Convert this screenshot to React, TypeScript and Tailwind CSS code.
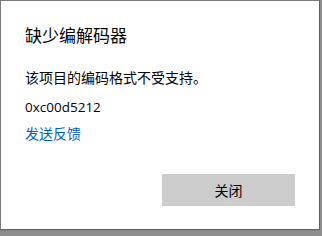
export default function App() {
  return (
    <div
      className="w-[322px] h-[236px] bg-[#8c8c8c] overflow-hidden"
      style={{ fontFamily: '"Noto Sans CJK SC", "Noto Sans", sans-serif' }}
    >
      <div className="w-[320px] h-[230px] bg-white border border-[#7a7a7a] border-r-[#5e5e5e] border-b-[#5e5e5e] flex flex-col pl-[24px] pr-[24px]">
        <div className="mt-[22px] text-[17px] leading-[24px] text-black">缺少编解码器</div>
        <div className="mt-[20px] text-[14px] leading-[20px] text-black">该项目的编码格式不受支持。</div>
        <div className="mt-[10px] text-[13.5px] leading-[20px] text-black" style={{ fontFamily: '"Open Sans", "Noto Sans", sans-serif' }}>0xc00d5212</div>
        <div className="mt-[6px] text-[14px] leading-[20px] text-[#0063b1]">发送反馈</div>
        <div className="flex justify-end mt-[31px]">
          <div className="w-[133px] h-[32px] bg-[#cccccc] flex items-center justify-center text-[14px] text-black">关闭</div>
        </div>
      </div>
    </div>
  );
}
